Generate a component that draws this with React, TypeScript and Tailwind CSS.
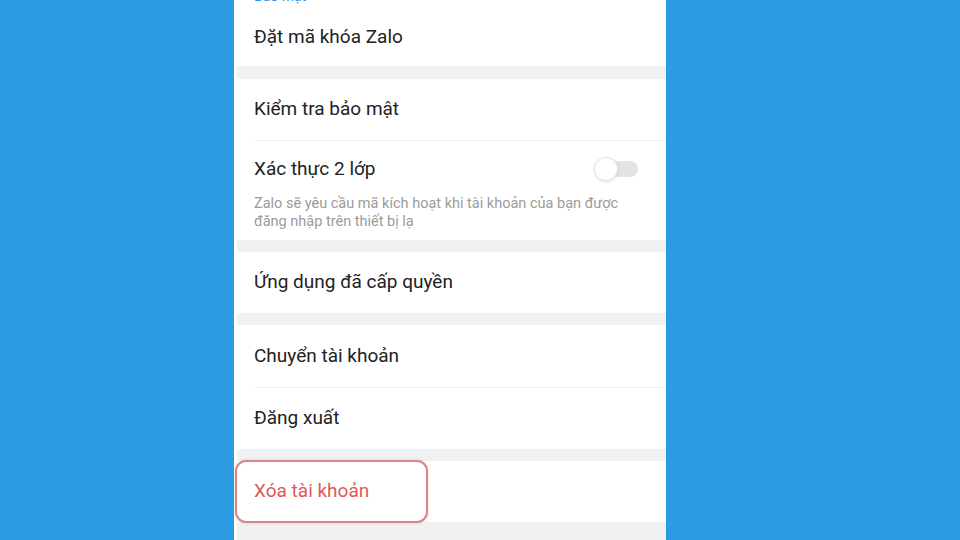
const font = { fontFamily: "Roboto, 'Noto Sans', sans-serif" };

function Row({ label, className = "" }: { label: string; className?: string }) {
  return (
    <div className={`flex h-[61px] items-center pl-[20px] text-[19px] text-[#222222] ${className}`}>
      {label}
    </div>
  );
}

function Gap({ h = "h-[12px]" }: { h?: string }) {
  return <div className={`${h} ml-[3px] bg-[#f0f1f3]`} />;
}

function Divider() {
  return <div className="ml-[20px] h-px bg-[#eeeff1]" />;
}

export default function App() {
  return (
    <div className="flex h-[540px] w-[960px] overflow-hidden bg-[#2c9be2] pl-[234px]" style={font}>
      <div className="flex w-[432px] flex-col bg-white">
        {/* section header, scrolled mostly out of view */}
        <div className="h-[8px] overflow-hidden pl-[20px]">
          <div className="-mt-[13px] text-[14px] leading-[18px] text-[#2f8fe8]">Bảo mật</div>
        </div>
        <div className="flex h-[58px] items-center pl-[20px] text-[19px] text-[#222222]">Đặt mã khóa Zalo</div>
        <Gap h="h-[13px]" />

        <Row label="Kiểm tra bảo mật" />
        <Divider />
        <div className="flex flex-col pb-[9px] pl-[20px] pr-[28px]">
          <div className="flex h-[56px] items-center justify-between">
            <span className="text-[19px] text-[#222222]">Xác thực 2 lớp</span>
            <div className="relative h-[24px] w-[44px]">
              <div className="absolute right-0 top-[4px] h-[16px] w-[36px] rounded-full bg-[#e3e3e3]" />
              <div className="absolute left-0 top-0 h-[24px] w-[24px] rounded-full border border-[#e6e6e6] bg-white shadow-[0_1px_3px_rgba(0,0,0,0.12)]" />
            </div>
          </div>
          <p className="-mt-[2px] text-[14.5px] leading-[18px] text-[#9b9b9b]">
            Zalo sẽ yêu cầu mã kích hoạt khi tài khoản của bạn được
            <br />
            đăng nhập trên thiết bị lạ
          </p>
        </div>
        <Gap />

        <Row label="Ứng dụng đã cấp quyền" />
        <Gap />

        <Row label="Chuyển tài khoản" className="h-[62px]" />
        <Divider />
        <Row label="Đăng xuất" className="h-[60px]" />
        <Gap />

        <div className="relative">
          <Row label="Xóa tài khoản" className="text-[#e2575a]" />
          <div className="absolute left-[1px] top-[-1px] h-[63px] w-[193px] rounded-[11px] border-2 border-[#d98489] shadow-[0_0_3px_rgba(217,132,137,0.4)]" />
        </div>
        <div className="ml-[3px] flex-1 bg-[#f0f1f3]" />
      </div>
    </div>
  );
}
